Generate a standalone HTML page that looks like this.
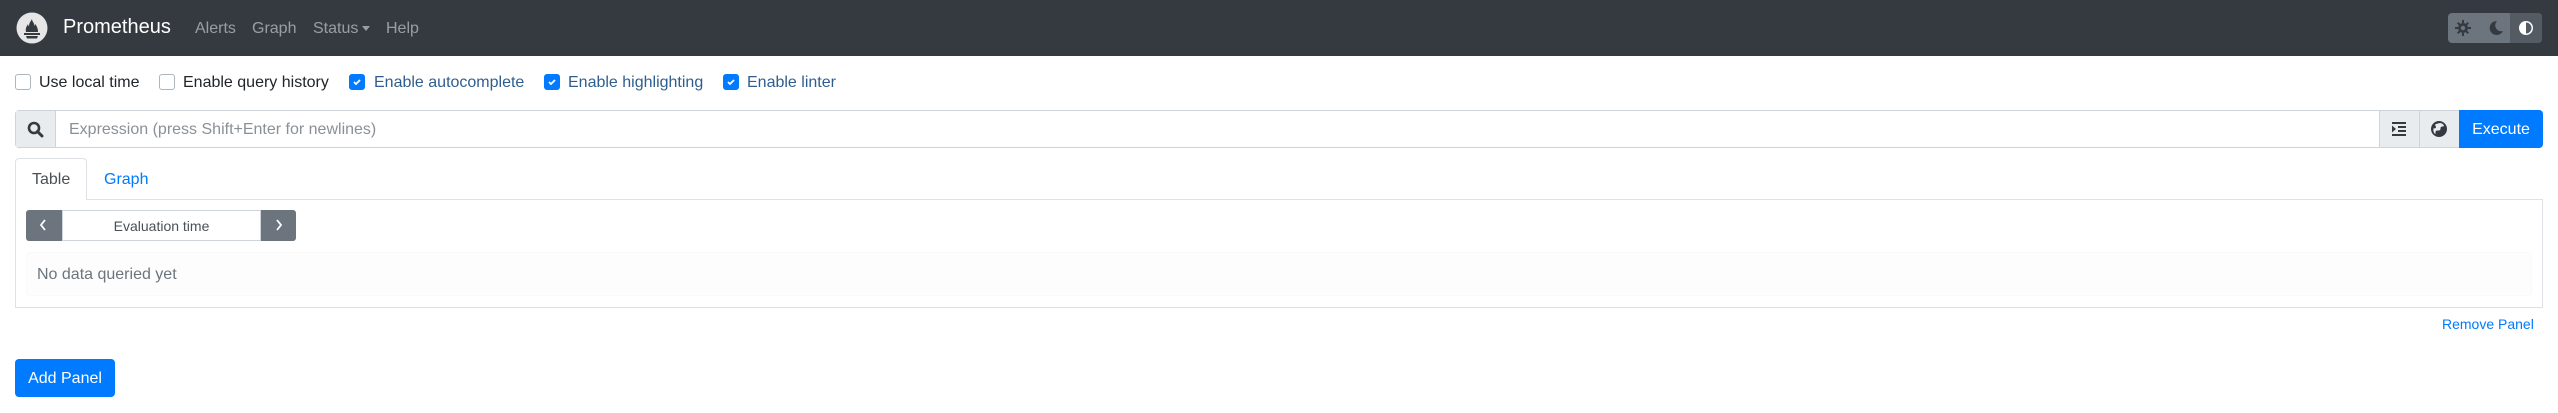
<!DOCTYPE html>
<html><head><meta charset="utf-8"><style>
*{box-sizing:border-box;margin:0;padding:0}
body{width:2558px;height:413px;background:#fff;font-family:"Liberation Sans",Arial,sans-serif;font-size:16px;color:#212529;position:relative;overflow:hidden}
.a{position:absolute}
.nav{left:0;top:0;width:2558px;height:56px;background:#343a40}
.nl{color:rgba(255,255,255,.5);top:20px;font-size:16px}
.cb{width:16px;height:16px;top:74px;border:1px solid #adb5bd;border-radius:3px;background:#fff}
.cb.on{background:#007bff;border-color:#007bff}
.lbl{top:73px;line-height:20px}
.lbl.on{color:#2f5e8e}
</style></head><body>
<div class="a nav"></div>
<svg class="a" style="left:16px;top:12px" width="32" height="32" viewBox="0 0 32 32"><circle cx="16" cy="16" r="15.5" fill="#e6e6e6"/><path d="M8 21h16v2H8zM10 24h12l-1 2.5h-10z" fill="#343a40"/><path d="M10 20c-1-4 1-6 2-8 0 2 1 2 1 2 0-3 2-5 3-7 0 3 3 4 2 7 1-1 1-2 1-2 2 2 3 5 3 8z" fill="#343a40"/></svg>
<div class="a" style="left:63px;top:16px;font-size:20px;color:#fff">Prometheus</div>
<div class="a nl" style="left:195px">Alerts</div>
<div class="a nl" style="left:252px">Graph</div>
<div class="a nl" style="left:313px">Status</div>
<div class="a" style="left:362px;top:26px;border-left:4px solid transparent;border-right:4px solid transparent;border-top:5px solid rgba(255,255,255,.5)"></div>
<div class="a nl" style="left:386px">Help</div>
<div class="a" style="left:2448px;top:13px;width:94px;height:30px;background:#6c757d;border-radius:4px;overflow:hidden"><div class="a" style="left:62px;top:0;width:32px;height:30px;background:#545b62"></div></div>
<svg class="a" style="left:2455px;top:20px" width="16" height="16" viewBox="0 0 16 16"><g fill="#343a40"><circle cx="8" cy="8" r="5"/><path d="M7 0h2v3H7zM7 13h2v3H7zM0 7h3v2H0zM13 7h3v2h-3z"/><path d="M2 3.4L3.4 2 5.5 4.1 4.1 5.5zM10.5 11.9l1.4-1.4 2.1 2.1-1.4 1.4zM2 12.6l2.1-2.1 1.4 1.4L3.4 14zM10.5 4.1L12.6 2 14 3.4 11.9 5.5z"/></g><circle cx="8" cy="8" r="2.2" fill="#6c757d"/></svg>
<svg class="a" style="left:2488px;top:20px" width="16" height="16" viewBox="0 0 16 16"><path d="M9 1a7 7 0 1 0 6 10A6 6 0 0 1 9 1z" fill="#343a40"/></svg>
<svg class="a" style="left:2518px;top:20px" width="16" height="16" viewBox="0 0 16 16"><circle cx="8" cy="8" r="7" fill="#fff"/><path d="M8 2.5a5.5 5.5 0 0 1 0 11z" fill="#545b62"/></svg>

<div class="a cb" style="left:15px"></div><div class="a lbl" style="left:39px">Use local time</div>
<div class="a cb" style="left:159px"></div><div class="a lbl" style="left:183px">Enable query history</div>
<div class="a cb on" style="left:349px"></div><div class="a lbl on" style="left:374px">Enable autocomplete</div>
<div class="a cb on" style="left:544px"></div><div class="a lbl on" style="left:568px">Enable highlighting</div>
<div class="a cb on" style="left:723px"></div><div class="a lbl on" style="left:747px">Enable linter</div>
<svg class="a" style="left:352px;top:77px" width="10" height="10"><path d="M2 5l2 2 4-4" stroke="#fff" stroke-width="1.8" fill="none"/></svg>
<svg class="a" style="left:547px;top:77px" width="10" height="10"><path d="M2 5l2 2 4-4" stroke="#fff" stroke-width="1.8" fill="none"/></svg>
<svg class="a" style="left:726px;top:77px" width="10" height="10"><path d="M2 5l2 2 4-4" stroke="#fff" stroke-width="1.8" fill="none"/></svg>

<div class="a" style="left:15px;top:110px;width:2528px;height:38px;border:1px solid #ced4da;border-radius:4px"></div>
<div class="a" style="left:16px;top:111px;width:40px;height:36px;background:#e9ecef;border-right:1px solid #ced4da"></div>
<svg class="a" style="left:27px;top:121px" width="17" height="17" viewBox="0 0 17 17"><circle cx="7" cy="7" r="5" stroke="#343a40" stroke-width="2.6" fill="none"/><path d="M10.5 10.5l4.5 4.5" stroke="#343a40" stroke-width="3" stroke-linecap="round"/></svg>
<div class="a" style="left:69px;top:121px;color:#8a9096">Expression (press Shift+Enter for newlines)</div>
<div class="a" style="left:2379px;top:111px;width:80px;height:36px;background:#e9ecef;border-left:1px solid #ced4da"><div class="a" style="left:39px;top:0;width:1px;height:36px;background:#ced4da"></div></div>
<svg class="a" style="left:2392px;top:122px" width="14" height="14" viewBox="0 0 14 14"><g fill="#343a40"><rect x="0" y="0" width="14" height="2"/><rect x="6" y="4" width="8" height="2"/><rect x="6" y="8" width="8" height="2"/><rect x="0" y="12" width="14" height="2"/><path d="M0 3.5l4 3.5-4 3.5z"/></g></svg>
<svg class="a" style="left:2431px;top:121px" width="16" height="16" viewBox="0 0 16 16"><circle cx="8" cy="8" r="8" fill="#343a40"/><path d="M9 2c2 0 4 2 4 3-1 1-2 0-3 1s0 2-1 3-3 0-4 1 0 3-1 3C2 11 2 8 3 7c1 1 2 0 2-1S3 4 5 3z" fill="#e9ecef"/></svg>
<div class="a" style="left:2459px;top:110px;width:84px;height:38px;background:#007bff;border-radius:0 4px 4px 0;color:#fff;line-height:39px;text-align:center">Execute</div>

<div class="a" style="left:15px;top:158px;width:72px;height:42px;border:1px solid #dee2e6;border-bottom:none;border-radius:4px 4px 0 0;background:#fff;z-index:2;color:#495057;padding:12px 0 0 16px">Table</div>
<div class="a" style="left:104px;top:171px;color:#007bff">Graph</div>
<div class="a" style="left:15px;top:199px;width:2528px;height:109px;border:1px solid #dee2e6"></div>
<div class="a" style="left:26px;top:210px;width:36px;height:31px;background:#6c757d;border-radius:3px 0 0 3px"></div>
<svg class="a" style="left:37px;top:218px" width="12" height="14"><path d="M8 2L4 7l4 5" stroke="#fff" stroke-width="1.8" fill="none"/></svg>
<div class="a" style="left:62px;top:210px;width:199px;height:31px;border:1px solid #ced4da;font-size:14px;color:#495057;text-align:center;line-height:30px">Evaluation time</div>
<div class="a" style="left:261px;top:210px;width:35px;height:31px;background:#6c757d;border-radius:0 3px 3px 0"></div>
<svg class="a" style="left:273px;top:218px" width="12" height="14"><path d="M4 2l4 5-4 5" stroke="#fff" stroke-width="1.8" fill="none"/></svg>
<div class="a" style="left:26px;top:252px;width:2506px;height:44px;background:#fdfdfd;border:1px solid #f9f9f9;border-radius:4px"></div>
<div class="a" style="left:37px;top:266px;color:#6c757d">No data queried yet</div>
<div class="a" style="left:2442px;top:316px;font-size:14px;color:#007bff">Remove Panel</div>
<div class="a" style="left:15px;top:359px;width:100px;height:38px;background:#007bff;border-radius:4px;color:#fff;text-align:center;line-height:39px">Add Panel</div>
</body></html>
